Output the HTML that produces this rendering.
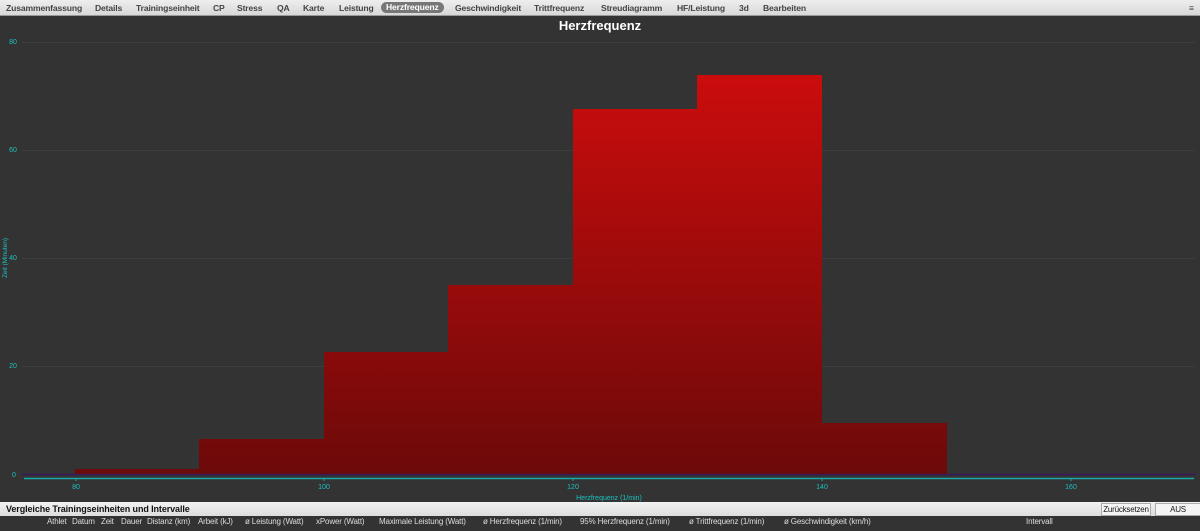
<!DOCTYPE html><html><head><style>
body{margin:0;width:1200px;height:531px;background:#333;font-family:"Liberation Sans",sans-serif;overflow:hidden;position:relative}
.tabs{position:absolute;top:0;left:0;width:1200px;height:15px;background:linear-gradient(#eee,#d8d8d8);border-bottom:1px solid #999;font-size:8.6px;font-weight:bold;color:#444;letter-spacing:-0.15px}
.tabs span{position:absolute;top:3px;white-space:nowrap}
.sel{background:#777;color:#fff;border-radius:7px;padding:0 5px;top:2px!important;line-height:11px}
.bar2{position:absolute;top:502px;left:0;width:1200px;height:14px;background:linear-gradient(#f2f2f2,#ddd);font-size:9px;font-weight:bold;color:#111;letter-spacing:-0.1px}
.btn{position:absolute;top:1px;height:11px;border:1px solid #aaa;background:#f4f4f4;font-size:8px;font-weight:normal;text-align:center;line-height:11px;letter-spacing:-0.2px}
.hdr{position:absolute;top:517px;font-size:8px;color:#ddd;white-space:nowrap;letter-spacing:-0.15px}
</style></head><body>
<div class="tabs">
<span style="left:6px">Zusammenfassung</span><span style="left:95px">Details</span><span style="left:136px">Trainingseinheit</span><span style="left:213px">CP</span><span style="left:237px">Stress</span><span style="left:277px">QA</span><span style="left:303px">Karte</span><span style="left:339px">Leistung</span><span class="sel" style="left:381px">Herzfrequenz</span><span style="left:455px">Geschwindigkeit</span><span style="left:534px">Trittfrequenz</span><span style="left:601px">Streudiagramm</span><span style="left:677px">HF/Leistung</span><span style="left:739px">3d</span><span style="left:763px">Bearbeiten</span><span style="left:1189px;font-weight:normal">≡</span>
</div>
<svg width="1200" height="486" style="position:absolute;top:16px;left:0" viewBox="0 16 1200 486">
<defs><linearGradient id="g" gradientUnits="userSpaceOnUse" x1="0" y1="75" x2="0" y2="474"><stop offset="0" stop-color="#cb0c0c"/><stop offset="1" stop-color="#6c0a0a"/></linearGradient></defs>
<text x="600" y="30" fill="#fff" font-size="13" font-weight="bold" text-anchor="middle">Herzfrequenz</text>
<g stroke="#3d3d3d" stroke-width="1"><line x1="22" y1="42.5" x2="1195" y2="42.5"/><line x1="22" y1="150.5" x2="1195" y2="150.5"/><line x1="22" y1="258.5" x2="1195" y2="258.5"/><line x1="22" y1="366.5" x2="1195" y2="366.5"/></g>
<g fill="url(#g)">
<rect x="75" y="469" width="125" height="5"/><rect x="199" y="439" width="125" height="35"/><rect x="324" y="352" width="125" height="122"/><rect x="448" y="285" width="125" height="189"/><rect x="573" y="109" width="125" height="365"/><rect x="697" y="75" width="125" height="399"/><rect x="822" y="423" width="125" height="51"/>
</g>
<line x1="22" y1="474.5" x2="1195" y2="474.5" stroke="#3a1a5a" stroke-width="1.5"/>
<line x1="24" y1="478.5" x2="1194" y2="478.5" stroke="#1aa8a8" stroke-width="1.5"/>
<g stroke="#1aa8a8"><line x1="76" y1="479" x2="76" y2="481"/><line x1="324" y1="479" x2="324" y2="481"/><line x1="573" y1="479" x2="573" y2="481"/><line x1="822" y1="479" x2="822" y2="481"/><line x1="1071" y1="479" x2="1071" y2="481"/></g>
<g fill="#1ec0c0" font-size="7" text-anchor="middle"><text x="13" y="44">80</text><text x="13" y="152">60</text><text x="13" y="260">40</text><text x="13" y="368">20</text><text x="14" y="477">0</text>
<text x="76" y="489">80</text><text x="324" y="489">100</text><text x="573" y="489">120</text><text x="822" y="489">140</text><text x="1071" y="489">160</text>
<text x="609" y="500">Herzfrequenz (1/min)</text>
<text transform="translate(7 258) rotate(-90)" font-size="6.5">Zeit (Minuten)</text></g>
</svg>
<div class="bar2"><span style="position:absolute;left:6px;top:2px">Vergleiche Trainingseinheiten und Intervalle</span>
<div class="btn" style="left:1101px;width:48px">Zurücksetzen</div><div class="btn" style="left:1155px;width:44px">AUS</div></div>
<span class="hdr" style="left:47px">Athlet</span><span class="hdr" style="left:72px">Datum</span><span class="hdr" style="left:101px">Zeit</span><span class="hdr" style="left:121px">Dauer</span><span class="hdr" style="left:147px">Distanz (km)</span><span class="hdr" style="left:198px">Arbeit (kJ)</span><span class="hdr" style="left:245px">ø Leistung (Watt)</span><span class="hdr" style="left:316px">xPower (Watt)</span><span class="hdr" style="left:379px">Maximale Leistung (Watt)</span><span class="hdr" style="left:483px">ø Herzfrequenz (1/min)</span><span class="hdr" style="left:580px">95% Herzfrequenz (1/min)</span><span class="hdr" style="left:689px">ø Trittfrequenz (1/min)</span><span class="hdr" style="left:784px">ø Geschwindigkeit (km/h)</span><span class="hdr" style="left:1026px">Intervall</span>
</body></html>
